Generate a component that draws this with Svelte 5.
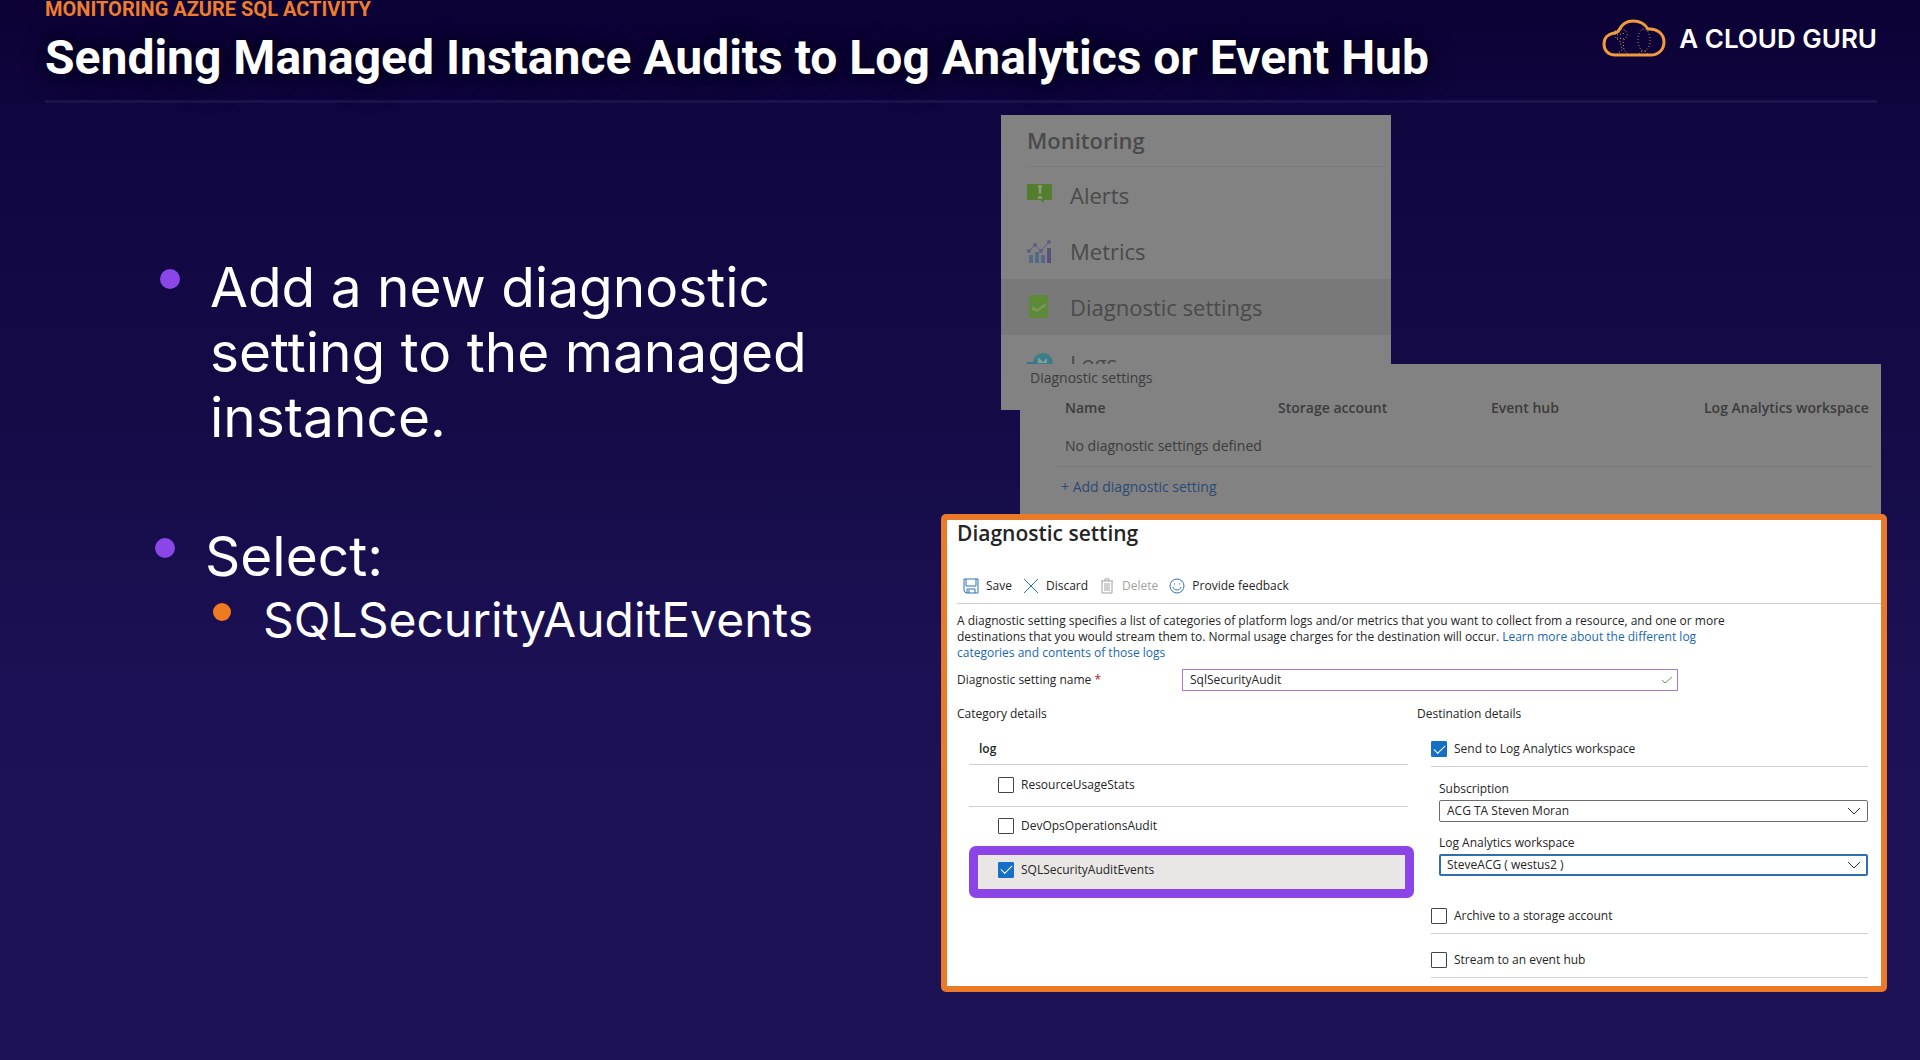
<script>
  const nav = ['Alerts', 'Metrics', 'Diagnostic settings', 'Logs'];
  let categories = $state([
    { name: 'ResourceUsageStats', on: false },
    { name: 'DevOpsOperationsAudit', on: false },
    { name: 'SQLSecurityAuditEvents', on: true }
  ]);
  let settingName = $state('SqlSecurityAudit');
  let toWorkspace = $state(true);
  let toStorage = $state(false);
  let toHub = $state(false);
</script>

{#snippet chevron()}
  <svg class="chevron" viewBox="0 0 14 8" aria-hidden="true"><path d="M1 1l6 6 6-6" /></svg>
{/snippet}

{#snippet navIcon(name)}
  <svg class="nav-icon" viewBox="0 0 26 26" aria-hidden="true">
    {#if name === 'Alerts'}
      <path fill="#547d30" d="M0 2h25v16h-8v3l-4-3H0z" />
      <path fill="#869a72" d="M11 3h4l-1 9h-2zM11 14h4v3h-4z" />
    {:else if name === 'Metrics'}
      <path fill="#536985" d="M2 17h4v8H2zM8 14h4v11H8zM14 17h4v8h-4z" />
      <path fill="#57527a" d="M20 10h4v15h-4z" />
      <path fill="none" stroke="#625c82" stroke-width="1" d="M1 14l7-7 6 6L23 3" />
      <circle cx="2" cy="13" r="2" fill="#625c82" /><circle cx="8" cy="7" r="2" fill="#625c82" />
      <circle cx="14" cy="13" r="2" fill="#625c82" /><circle cx="22" cy="4" r="2" fill="#625c82" />
    {:else if name === 'Logs'}
      <circle cx="16" cy="13" r="10" fill="#3a7f88" />
      <path fill="#8a9a9c" d="M11 7l5 5 4-4v5h-9z" />
      <path fill="#35748a" d="M0 12h9v9H0z" />
    {:else}
      <path fill="#5c8a36" d="M2 1h19v23H2z" />
      <path fill="#79965e" d="M5 12l5 3 9-6v3l-9 6-5-2z" />
    {/if}
  </svg>
{/snippet}

<div class="slide">
  <header>
    <div class="titles">
      <p class="eyebrow">MONITORING AZURE SQL ACTIVITY</p>
      <h1>Sending Managed Instance Audits to Log Analytics or Event Hub</h1>
    </div>
    <div class="brand">
      <svg class="cloud" viewBox="0 0 64 40" aria-hidden="true">
        <path class="outline" d="M13 36C6 36 2 31 2 25c0-6 4-10 10-11 2 0 4-1 5-3C20 5 25 2 31 2c7 0 12 3 15 8 9-1 16 5 16 13s-6 13-13 13z" />
        <ellipse class="dots" cx="42" cy="21" rx="6" ry="11" />
        <path class="dots" d="M40 32l-3 3M43 32l3 3M13 12c4-3 11-2 12 2 1 5-3 5-4 9l1 8 4 4M13 12c-1 5 1 8 5 10l2 9-5 4M15 16l8-2M15 19l8 1" />
      </svg>
      <span>A CLOUD GURU</span>
    </div>
  </header>

  <main>
    <ul class="points">
      <li><span class="dot"></span><span class="text">Add a new diagnostic setting to the managed instance.</span></li>
      <li class="second">
        <span class="dot"></span>
        <div class="text">
          Select:
          <ul class="sub">
            <li><span class="dot small"></span><span>SQLSecurityAuditEvents</span></li>
          </ul>
        </div>
      </li>
    </ul>

    <div class="shots">
      <nav class="monitoring">
        <h2>Monitoring</h2>
        <ul>
          {#each nav as item}
            <li class:active={item === 'Diagnostic settings'}>
              {@render navIcon(item)}<span>{item}</span>
            </li>
          {/each}
        </ul>
      </nav>

      <section class="listing">
        <h2>Diagnostic settings</h2>
        <table>
          <thead>
            <tr><th>Name</th><th>Storage account</th><th>Event hub</th><th>Log Analytics workspace</th></tr>
          </thead>
          <tbody>
            <tr><td colspan="4">No diagnostic settings defined</td></tr>
          </tbody>
        </table>
        <a href="#add">+ Add diagnostic setting</a>
      </section>

      <section class="setting">
        <h2>Diagnostic setting</h2>
        <div class="toolbar">
          <button type="button">
            <svg viewBox="0 0 16 16"><path d="M1 1h14v14H3l-2-2zM3 1v7h10V1M4 15v-4h8v4M6 12v3" /></svg>Save
          </button>
          <button type="button">
            <svg viewBox="0 0 16 16"><path d="M1 1l14 14M15 1L1 15" /></svg>Discard
          </button>
          <button type="button" disabled>
            <svg viewBox="0 0 16 16"><path d="M2 3h12M6 3V1h4v2M3 3v12h10V3M6 5v8M8 5v8M10 5v8" /></svg>Delete
          </button>
          <button type="button">
            <svg viewBox="0 0 16 16"><circle cx="8" cy="8" r="7" /><path d="M4 9c1 4 7 4 8 0M5 6h1M10 6h1" /></svg>Provide feedback
          </button>
        </div>
        <p class="intro">
          A diagnostic setting specifies a list of categories of platform logs and/or metrics that you want to collect from a
          resource, and one or more destinations that you would stream them to. Normal usage charges for the destination will
          occur. <a href="#learn">Learn more about the different log<br />categories and contents of those logs</a>
        </p>
        <div class="name-row">
          <label for="name">Diagnostic setting name <span class="req">*</span></label>
          <div class="field">
            <input id="name" type="text" bind:value={settingName} />
            <svg class="valid" viewBox="0 0 12 8" aria-hidden="true"><path d="M1 4l3 3 7-6" /></svg>
          </div>
        </div>

        <div class="columns">
          <div>
            <h3>Category details</h3>
            <ul class="categories">
              <li class="group">log</li>
              {#each categories as c}
                <li class:marked={c.on}>
                  <label><input type="checkbox" bind:checked={c.on} />{c.name}</label>
                </li>
              {/each}
            </ul>
          </div>
          <div>
            <h3>Destination details</h3>
            <div class="destinations">
              <label class="dest"><input type="checkbox" bind:checked={toWorkspace} />Send to Log Analytics workspace</label>
              <div class="pickers">
                <label for="sub">Subscription</label>
                <div class="picker">
                  <select id="sub"><option>ACG TA Steven Moran</option></select>
                  {@render chevron()}
                </div>
                <label for="ws">Log Analytics workspace</label>
                <div class="picker focus">
                  <select id="ws"><option>SteveACG ( westus2 )</option></select>
                  {@render chevron()}
                </div>
              </div>
              <label class="dest"><input type="checkbox" bind:checked={toStorage} />Archive to a storage account</label>
              <label class="dest last"><input type="checkbox" bind:checked={toHub} />Stream to an event hub</label>
            </div>
          </div>
        </div>
      </section>
    </div>
  </main>
</div>

<style>
  :global(body) {
    background: #1d1256;
  }
  .slide,
  .slide * {
    box-sizing: border-box;
  }
  .slide {
    min-height: 100vh;
    background: linear-gradient(#0c0134, #100742 14%, #140b47 40%, #1a1052 60%, #1d1256 80%);
    font-family: Inter, 'Liberation Sans', sans-serif;
    color: #fff;
  }
  h1, h2, h3, p, ul {
    margin: 0;
    padding: 0;
  }
  ul {
    list-style: none;
  }
  header {
    display: flex;
    justify-content: space-between;
    margin: 0 43px 0 45px;
    border-bottom: 3px solid #1c144c;
  }
  .titles {
    font-family: Roboto, Inter, sans-serif;
  }
  .eyebrow {
    font-size: 20px;
    line-height: 18px;
    font-weight: 700;
    color: #ee7d2e;
  }
  h1 {
    margin: 10px 0 12px;
    font-size: 48px;
    line-height: 60px;
    font-weight: 700;
    white-space: nowrap;
    text-shadow: 0 2px 24px #06021c, 0 0 12px #06021c;
  }
  .brand {
    display: flex;
    gap: 13px;
    align-items: center;
    align-self: flex-start;
    height: 78px;
    font-size: 26px;
    line-height: 32px;
    font-weight: 600;
    white-space: nowrap;
  }
  .cloud {
    width: 64px;
    height: 40px;
    fill: none;
  }
  .outline {
    stroke: #f09a3e;
    stroke-width: 3;
  }
  .dots {
    stroke: #d9a06a;
    stroke-width: 1;
    stroke-dasharray: 1 2;
  }
  main {
    display: grid;
    grid-template-columns: minmax(0, 941fr) minmax(0, 979fr);
  }

  .points {
    padding: 152px 80px 0 160px;
    font-size: 55px;
    line-height: 65px;
  }
  .points li {
    display: flex;
    gap: 30px;
  }
  .points .second {
    margin: 74px 0 0 -5px;
  }
  .dot {
    flex: none;
    width: 20px;
    height: 20px;
    margin-top: 14px;
    border-radius: 50%;
    background: #8b46e8;
  }
  .dot.small {
    width: 18px;
    height: 18px;
    background: #f07a1f;
  }
  .points .sub li {
    gap: 32px;
  }
  .sub {
    padding-left: 8px;
    font-size: 48px;
    line-height: 62px;
  }

  .shots {
    padding: 12px 33px 0 0;
    font-family: 'Open Sans', 'Noto Sans', sans-serif;
  }
  .monitoring {
    width: 390px;
    margin-left: 60px;
    padding-bottom: 19px;
    background: #828282;
    color: #4a4a4a;
    font-size: 22px;
    line-height: 30px;
  }
  .monitoring h2 {
    margin: 0 5px 0 26px;
    border-bottom: 1px solid #7a7a7a;
    font-size: 22px;
    line-height: 51px;
    font-weight: 600;
  }
  .monitoring li {
    display: flex;
    align-items: center;
    gap: 17px;
    height: 56px;
    padding-left: 26px;
  }
  .monitoring .active {
    background: #797979;
  }
  .nav-icon {
    width: 26px;
    height: 26px;
  }
  .listing {
    position: relative;
    margin: -46px 6px 0 79px;
    padding: 4px 9px 12px 38px;
    background: #828282;
    color: #3c3c3c;
    font-size: 14px;
    line-height: 20px;
  }
  .listing h2 {
    margin-left: -28px;
    font-size: 14px;
    line-height: 20px;
    font-weight: 400;
  }
  table {
    width: 100%;
    table-layout: fixed;
    border-collapse: collapse;
  }
  th, td {
    height: 39px;
    padding: 0 0 0 7px;
    text-align: left;
    white-space: nowrap;
  }
  th {
    width: 213px;
    font-weight: 600;
  }
  th:last-child {
    width: auto;
  }
  td {
    border-bottom: 1px solid #777;
  }
  .listing a {
    display: block;
    padding: 10px 0 5px 3px;
    color: #2c4a75;
    text-decoration: none;
  }

  .setting {
    position: relative;
    border: 6px solid #ea7a28;
    border-radius: 5px;
    padding: 0 0 8px 10px;
    background: #fff;
    color: #252525;
    font-size: 12px;
    line-height: 16px;
  }
  .setting h2 {
    font-size: 21px;
    line-height: 26px;
    font-weight: 600;
  }
  .toolbar {
    display: flex;
    gap: 11px;
    height: 34px;
    margin-top: 24px;
    padding-left: 6px;
    border-bottom: 1px solid #d0cece;
  }
  button {
    display: flex;
    align-items: center;
    gap: 7px;
    border: 0;
    padding: 0;
    background: none;
    color: inherit;
    font: inherit;
  }
  button svg {
    width: 16px;
    height: 16px;
    fill: none;
    stroke: #2a72bd;
    stroke-width: 1;
  }
  button:disabled {
    color: #a3a19f;
  }
  button:disabled svg {
    stroke: #a3a19f;
  }
  .intro {
    max-width: 784px;
    margin-top: 9px;
  }
  .intro a {
    color: #1a68ae;
    text-decoration: none;
  }
  .name-row {
    display: flex;
    align-items: center;
    margin-top: 8px;
  }
  .name-row label {
    flex: 0 0 225px;
  }
  .req {
    color: #a4262c;
  }
  .field, .picker {
    position: relative;
    display: flex;
    height: 22px;
  }
  .field {
    flex: 0 1 496px;
  }
  .field input, select {
    appearance: none;
    width: 100%;
    border: 1px solid #6e6c6a;
    border-radius: 2px;
    padding: 0 7px;
    background: #fff;
    color: inherit;
    font: inherit;
  }
  .field input {
    border-color: #b07ac0;
    border-radius: 0;
  }
  .valid {
    position: absolute;
    right: 5px;
    top: 7px;
    width: 12px;
    height: 8px;
    fill: none;
    stroke: #6aa548;
  }
  .chevron {
    position: absolute;
    right: 7px;
    top: 7px;
    width: 14px;
    height: 8px;
    fill: none;
    stroke: #333;
    pointer-events: none;
  }
  .focus select {
    border: 2px solid #2e6fae;
    padding: 0 6px;
  }
  .columns {
    display: grid;
    grid-template-columns: minmax(0, 460fr) minmax(0, 451fr);
    margin: 15px 13px 0 0;
  }
  h3 {
    font-size: 12px;
    line-height: 16px;
    font-weight: 400;
  }
  .categories {
    margin: 12px 9px 0 12px;
  }
  .categories li {
    display: flex;
    align-items: center;
    height: 42px;
    padding-left: 29px;
    border-bottom: 1px solid #cfcfcf;
  }
  .categories .group {
    height: 31px;
    padding-left: 10px;
    font-weight: 600;
  }
  .categories li:nth-last-child(2) {
    height: 39px;
    border-bottom: 0;
  }
  .categories .marked {
    height: 52px;
    margin-right: -6px;
    border: 9px solid #8b44e8;
    border-radius: 7px;
    padding: 0 0 4px 20px;
    background: #e9e7e6;
  }
  .categories label, .dest {
    display: flex;
    align-items: center;
    gap: 7px;
  }
  input[type='checkbox'] {
    appearance: none;
    flex: none;
    width: 16px;
    height: 16px;
    margin: 0;
    border: 1px solid #444;
    border-radius: 1px;
    background: #fff;
  }
  input[type='checkbox']:checked {
    display: grid;
    place-items: center;
    border-color: #156fc4;
    background: #156fc4;
  }
  input[type='checkbox']:checked::before {
    content: '';
    width: 10px;
    height: 5px;
    margin-bottom: 3px;
    border: solid #fff;
    border-width: 0 0 1px 1px;
    transform: rotate(-45deg);
  }
  .destinations {
    margin-top: 11px;
    padding-left: 14px;
  }
  .dest {
    height: 34px;
    border-bottom: 1px solid #cfcfcf;
  }
  .pickers {
    padding: 14px 0 24px 8px;
  }
  .pickers label {
    display: block;
    margin-bottom: 3px;
  }
  .picker + label {
    margin-top: 13px;
  }
  .last {
    margin-top: 10px;
  }
</style>
